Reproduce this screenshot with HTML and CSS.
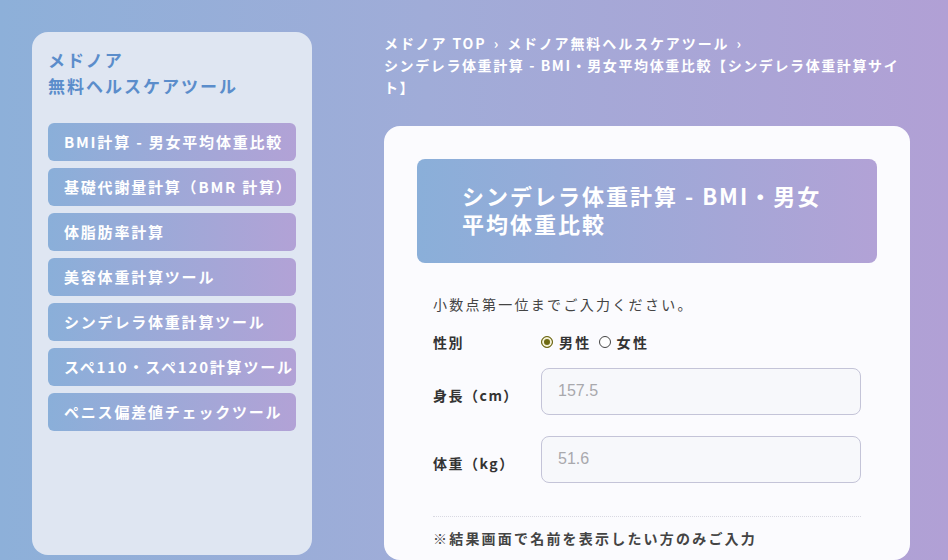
FILE: index.html
```html
<!DOCTYPE html>
<html lang="ja">
<head>
<meta charset="utf-8">
<title>シンデレラ体重計算</title>
<link rel="stylesheet" href="styles.css">
</head>
<body>
<div class="page">
  <aside class="sidebar">
    <h2 class="side-title">メドノア<br>無料ヘルスケアツール</h2>
    <nav class="side-nav">
      <a class="nav-item">BMI計算 - 男女平均体重比較</a>
      <a class="nav-item">基礎代謝量計算（BMR 計算）</a>
      <a class="nav-item">体脂肪率計算</a>
      <a class="nav-item">美容体重計算ツール</a>
      <a class="nav-item">シンデレラ体重計算ツール</a>
      <a class="nav-item">スペ110・スペ120計算ツール</a>
      <a class="nav-item">ペニス偏差値チェックツール</a>
    </nav>
  </aside>
  <main class="main">
    <div class="crumbs">
      <span>メドノア TOP <span class="sep">›</span> メドノア無料ヘルスケアツール <span class="sep">›</span></span>
      <span class="crumb-current">シンデレラ体重計算 - BMI・男女平均体重比較【シンデレラ体重計算サイト】</span>
    </div>
    <section class="card">
      <div class="card-head">
        <h1 class="card-title">シンデレラ体重計算 - BMI・男女平均体重比較</h1>
      </div>
      <div class="form">
        <p class="note">小数点第一位までご入力ください。</p>
        <div class="row row-radio">
          <span class="label">性別</span>
          <div class="radios">
            <span class="radio checked"></span><span class="radio-text">男性</span>
            <span class="radio"></span><span class="radio-text">女性</span>
          </div>
        </div>
        <div class="row">
          <span class="label">身長（cm）</span>
          <div class="input"><span class="ph">157.5</span></div>
        </div>
        <div class="row">
          <span class="label">体重（kg）</span>
          <div class="input"><span class="ph">51.6</span></div>
        </div>
        <div class="divider"></div>
        <p class="note2">※結果画面で名前を表示したい方のみご入力</p>
      </div>
    </section>
  </main>
</div>
</body>
</html>
```

FILE: styles.css
```css
html, body {
  margin: 0;
  padding: 0;
}
body {
  width: 948px;
  height: 560px;
  overflow: hidden;
  background: linear-gradient(90deg, #8db0d9 0%, #a0acd8 45%, #b1a0d5 100%);
  font-family: "Noto Sans CJK JP", "Noto Sans", sans-serif;
}
.page {
  display: flex;
  padding: 32px 38px 0 32px;
}
.sidebar {
  width: 280px;
  height: 523px;
  flex: none;
  box-sizing: border-box;
  padding: 15px 16px;
  background: #dfe6f2;
  border-radius: 16px;
}
.side-title {
  margin: 0 0 24px;
  font-size: 17px;
  line-height: 26px;
  font-weight: 700;
  letter-spacing: 2px;
  color: #5b8dcb;
}
.side-nav {
  display: flex;
  flex-direction: column;
  gap: 7px;
}
.nav-item {
  display: block;
  height: 38px;
  line-height: 38px;
  padding-left: 16px;
  border-radius: 6px;
  background: linear-gradient(90deg, #8aafd9 0%, #b2a2d6 100%);
  color: #fff;
  font-size: 15px;
  font-weight: 700;
  letter-spacing: 1.8px;
  white-space: nowrap;
}
.main {
  margin-left: 72px;
  width: 526px;
}
.crumbs {
  color: #fff;
  font-size: 14px;
  font-weight: 700;
  line-height: 22px;
  letter-spacing: 1.9px;
  padding-top: 0;
  height: 94px;
}
.sep {
  margin: 0 2px;
}
.crumb-current {
  display: block;
  letter-spacing: 1.6px;
}
.card {
  background: #fbfbfe;
  border-radius: 16px;
  padding: 33px 33px 0;
  height: 434px;
  overflow: hidden;
  box-sizing: border-box;
}
.card-head {
  background: linear-gradient(90deg, #8aafd9 0%, #b2a2d6 100%);
  border-radius: 8px;
  padding: 22px 45px 26px;
}
.card-title {
  margin: 0;
  color: #fff;
  font-size: 22px;
  line-height: 28px;
  font-weight: 700;
  letter-spacing: 2px;
}
.form {
  padding: 0 16px;
}
.note {
  margin: 29px 0 0;
  font-size: 14px;
  line-height: 24px;
  letter-spacing: 2.3px;
  color: #444;
}
.row {
  display: grid;
  grid-template-columns: 108px 1fr;
  align-items: center;
  margin-top: 21px;
}
.row-radio {
  margin-top: 14px;
  height: 24px;
}
.row-radio + .row {
  margin-top: 14px;
}
.label {
  font-size: 14px;
  font-weight: 700;
  letter-spacing: 1.5px;
  color: #333;
  padding-top: 6px;
}
.row-radio .label {
  padding-top: 0;
}
.radios {
  display: flex;
  align-items: center;
  font-size: 14px;
  font-weight: 700;
  letter-spacing: 2.3px;
  color: #333;
}
.radio {
  width: 12px;
  height: 12px;
  box-sizing: border-box;
  border: 1px solid #444;
  border-radius: 50%;
  background: #fff;
  margin-right: 6px;
}
.radio.checked {
  border-color: #6b6510;
  background: #6e6a12;
  box-shadow: inset 0 0 0 2px #f4f1d8;
}
.radio-text {
  margin-right: 7px;
}
.input {
  height: 47px;
  box-sizing: border-box;
  border: 1px solid #c4c4d8;
  border-radius: 8px;
  background: #f7f8fb;
  padding-left: 16px;
  display: flex;
  align-items: center;
}
.ph {
  font-family: "Liberation Sans", Arial, sans-serif;
  font-size: 16px;
  color: #a9a9ad;
  margin-top: -1px;
}
.divider {
  margin-top: 33px;
  border-top: 1px dotted #d9d9e2;
}
.note2 {
  margin: 9px 0 0;
  font-size: 14px;
  line-height: 24px;
  font-weight: 700;
  letter-spacing: 2.2px;
  color: #444;
}
```
